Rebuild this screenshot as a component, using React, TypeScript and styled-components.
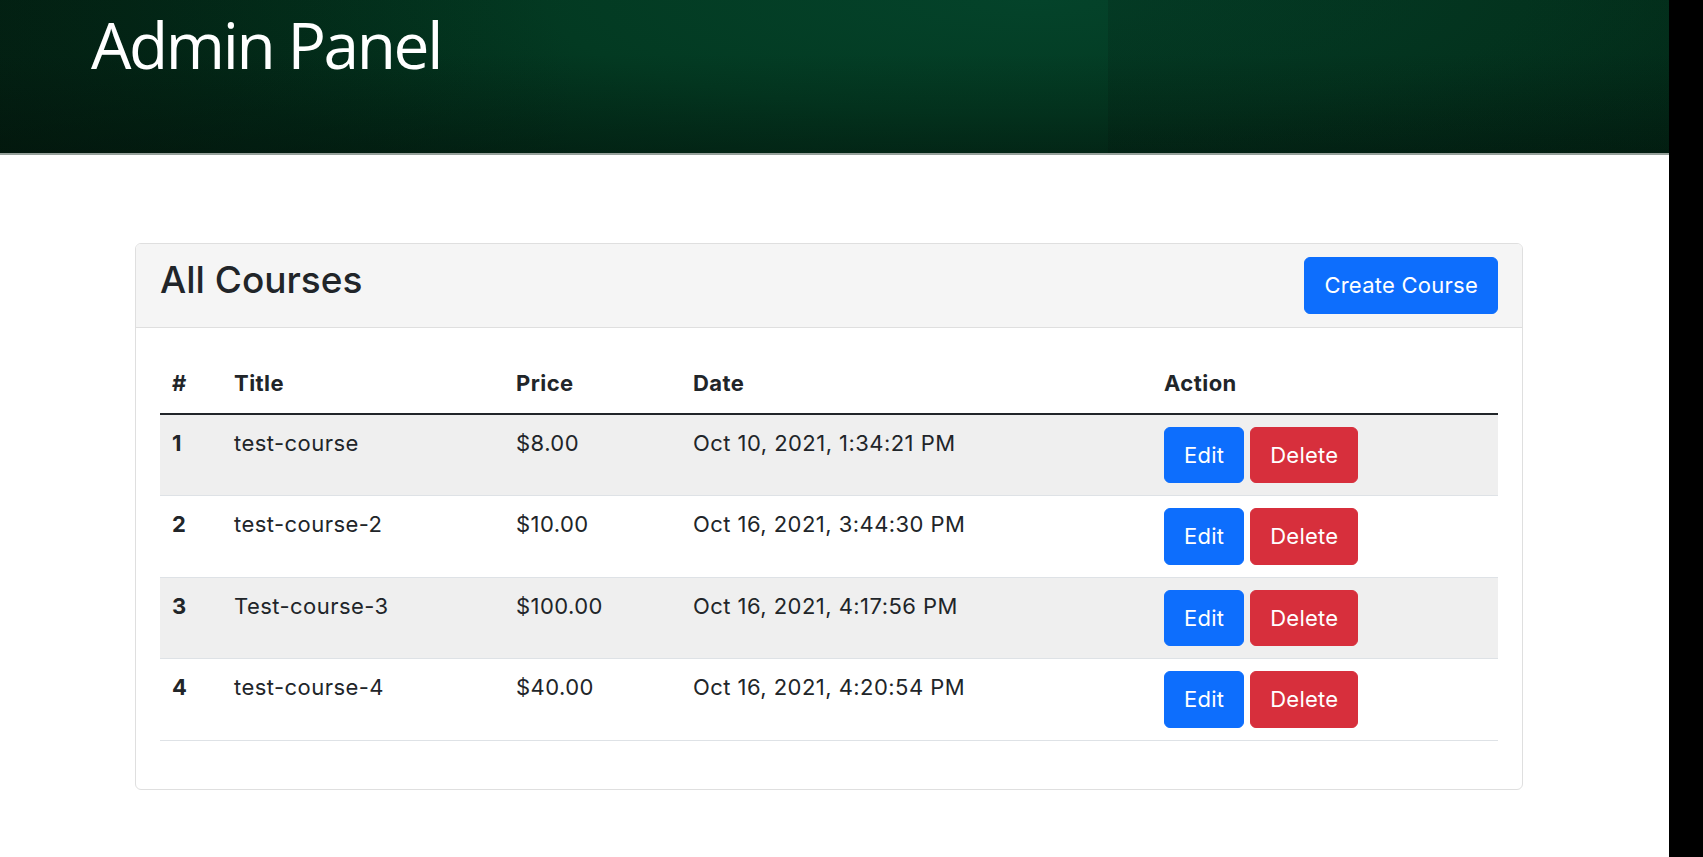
import React from "react";
import styled, { createGlobalStyle } from "styled-components";

const GlobalStyle = createGlobalStyle`
  html, body { margin: 0; padding: 0; background: #ffffff; }
  body { font-family: Inter, "Liberation Sans", sans-serif; color: #212529; }
  * { box-sizing: border-box; }
`;

const Page = styled.div`
  display: flex;
  min-height: 100vh;
`;

const Main = styled.div`
  flex: 1;
  display: flex;
  flex-direction: column;
`;

const SideStrip = styled.div`
  width: 35px;
  flex: none;
  background: #000000;
`;

const Banner = styled.header`
  height: 155px;
  padding: 13px 0 0 91px;
  border-bottom: 2px solid #95a09a;
  background:
    linear-gradient(to right, rgba(0, 0, 0, 0) 1108px, rgba(4, 12, 8, 0.15) 1108px),
    linear-gradient(to bottom, rgba(0, 0, 0, 0) 35%, rgba(3, 14, 8, 0.35) 100%),
    linear-gradient(to right, rgba(4, 20, 12, 0.35) 0%, rgba(0, 0, 0, 0) 35%),
    radial-gradient(ellipse 1400px 330px at 62% 0%, #04432a 0%, #033a22 35%, #022a18 65%, #021e11 100%);
`;

const BannerTitle = styled.h1`
  margin: 0;
  font-family: "Open Sans", sans-serif;
  font-weight: 400;
  font-size: 64px;
  line-height: 64px;
  letter-spacing: -2.4px;
  color: #ffffff;
`;

const Content = styled.main`
  padding: 88px 146px 40px 135px;
`;

const Card = styled.section`
  border: 1px solid #dfdfdf;
  border-radius: 6px;
  background: #ffffff;
  overflow: hidden;
`;

const CardHeader = styled.div`
  display: flex;
  align-items: center;
  justify-content: space-between;
  padding: 13px 24px 13px;
  background: #f5f5f5;
  border-bottom: 1px solid #dfdfdf;
`;

const CardTitle = styled.h2`
  margin: 0 0 10px 0;
  font-size: 37px;
  font-weight: 500;
  line-height: 1.2;
  letter-spacing: 0;
`;

const CardBody = styled.div`
  padding: 27px 24px 25px;
`;

const Button = styled.button<{ $variant: "primary" | "danger" }>`
  font-family: Inter, "Liberation Sans", sans-serif;
  font-size: 22px;
  line-height: 34.5px;
  letter-spacing: 0.25px;
  padding: 10px 19px;
  border-radius: 6px;
  border: 1px solid ${(p) => (p.$variant === "primary" ? "#0d6efd" : "#d72f3c")};
  background: ${(p) => (p.$variant === "primary" ? "#0d6efd" : "#d72f3c")};
  color: #ffffff;
  cursor: pointer;
`;

const Table = styled.table`
  width: 100%;
  border-collapse: collapse;
  table-layout: fixed;
  margin-bottom: 23px;
  font-size: 22px;
  line-height: 33px;
  letter-spacing: 0.45px;
`;

const Col = styled.col<{ $w: number }>`
  width: ${(p) => p.$w}px;
`;

const HeadCell = styled.th`
  text-align: left;
  font-weight: 700;
  padding: 12px 12px 13px;
  border-bottom: 2px solid #212529;
`;

const Row = styled.tr<{ $striped: boolean }>`
  background: ${(p) => (p.$striped ? "#efefef" : "#ffffff")};
`;

const Cell = styled.td<{ $bold?: boolean }>`
  padding: 12px 12px;
  vertical-align: top;
  font-weight: ${(p) => (p.$bold ? 700 : 400)};
  border-bottom: 1px solid #dee2e6;
  color: #212529;
`;

const Actions = styled.div`
  display: flex;
  gap: 6px;
`;

const courses = [
  { id: 1, title: "test-course", price: "$8.00", date: "Oct 10, 2021, 1:34:21 PM" },
  { id: 2, title: "test-course-2", price: "$10.00", date: "Oct 16, 2021, 3:44:30 PM" },
  { id: 3, title: "Test-course-3", price: "$100.00", date: "Oct 16, 2021, 4:17:56 PM" },
  { id: 4, title: "test-course-4", price: "$40.00", date: "Oct 16, 2021, 4:20:54 PM" },
];

export default function App() {
  return (
    <Page>
      <GlobalStyle />
      <Main>
        <Banner>
          <BannerTitle>Admin Panel</BannerTitle>
        </Banner>
        <Content>
          <Card>
            <CardHeader>
              <CardTitle>All Courses</CardTitle>
              <Button $variant="primary">Create Course</Button>
            </CardHeader>
            <CardBody>
              <Table>
                <colgroup>
                  <Col $w={62} />
                  <Col $w={282} />
                  <Col $w={177} />
                  <Col $w={471} />
                  <Col $w={346} />
                </colgroup>
                <thead>
                  <tr>
                    <HeadCell>#</HeadCell>
                    <HeadCell>Title</HeadCell>
                    <HeadCell>Price</HeadCell>
                    <HeadCell>Date</HeadCell>
                    <HeadCell>Action</HeadCell>
                  </tr>
                </thead>
                <tbody>
                  {courses.map((c, i) => (
                    <Row key={c.id} $striped={i % 2 === 0}>
                      <Cell $bold>{c.id}</Cell>
                      <Cell>{c.title}</Cell>
                      <Cell>{c.price}</Cell>
                      <Cell>{c.date}</Cell>
                      <Cell>
                        <Actions>
                          <Button $variant="primary">Edit</Button>
                          <Button $variant="danger">Delete</Button>
                        </Actions>
                      </Cell>
                    </Row>
                  ))}
                </tbody>
              </Table>
            </CardBody>
          </Card>
        </Content>
      </Main>
      <SideStrip />
    </Page>
  );
}
